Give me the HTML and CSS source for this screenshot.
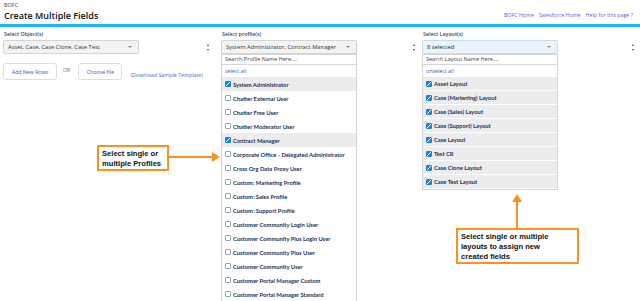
FILE: index.html
```html
<!DOCTYPE html>
<html lang="en">
<head>
    <meta charset="UTF-8">
    <meta name="viewport" content="width=device-width, initial-scale=1.0">
    <title>Create Multiple Fields</title>
    <link rel="stylesheet" href="styles.css">
</head>
<body>

<!-- Page header -->
<header class="page-head">
    <div class="titles">
        <div class="app-name">BOFC</div>
        <h1>Create Multiple Fields</h1>
    </div>
    <nav class="links">
        <a href="#">BOFC Home</a>
        <a href="#">Salesforce Home</a>
        <a href="#">Help for this page ?</a>
    </nav>
</header>

<main class="cols">

    <!-- Objects -->
    <section class="col col-object">
        <div class="field-label">Select Object(s)</div>
        <div class="select-row">
            <div class="select">
                <span>Asset, Case, Case Clone, Case Test</span>
                <span class="caret"></span>
            </div>
            <span class="spin"></span>
        </div>
        <div class="actions">
            <button class="btn">Add New Rows</button>
            <span class="or">OR</span>
            <button class="btn">Choose file</button>
            <a href="#" class="sample">(Download Sample Template)</a>
        </div>
    </section>

    <!-- Profiles -->
    <section class="col col-profile">
        <div class="field-label">Select profile(s)</div>
        <div class="select-row">
            <div class="select">
                <span>System Administrator, Contract Manager</span>
                <span class="caret"></span>
            </div>
            <span class="spin"></span>
        </div>
        <div class="panel">
            <div class="search">Search Profile Name Here....</div>
            <a href="#" class="toggle-all">select all</a>
            <ul class="options">
                <li class="on"><span class="box"></span>System Administrator</li>
                <li><span class="box"></span>Chatter External User</li>
                <li><span class="box"></span>Chatter Free User</li>
                <li><span class="box"></span>Chatter Moderator User</li>
                <li class="on"><span class="box"></span>Contract Manager</li>
                <li><span class="box"></span>Corporate Office - Delegated Administrator</li>
                <li><span class="box"></span>Cross Org Data Proxy User</li>
                <li><span class="box"></span>Custom: Marketing Profile</li>
                <li><span class="box"></span>Custom: Sales Profile</li>
                <li><span class="box"></span>Custom: Support Profile</li>
                <li><span class="box"></span>Customer Community Login User</li>
                <li><span class="box"></span>Customer Community Plus Login User</li>
                <li><span class="box"></span>Customer Community Plus User</li>
                <li><span class="box"></span>Customer Community User</li>
                <li><span class="box"></span>Customer Portal Manager Custom</li>
                <li><span class="box"></span>Customer Portal Manager Standard</li>
            </ul>
        </div>
    </section>

    <!-- Layouts -->
    <section class="col col-layout">
        <div class="field-label">Select Layout(s)</div>
        <div class="select-row">
            <div class="select select-open">
                <span>8 selected</span>
                <span class="caret"></span>
            </div>
            <span class="spin"></span>
        </div>
        <div class="panel">
            <div class="search">Search Layout Name Here....</div>
            <a href="#" class="toggle-all">unselect all</a>
            <ul class="options all-on">
                <li class="on"><span class="box"></span>Asset Layout</li>
                <li class="on"><span class="box"></span>Case (Marketing) Layout</li>
                <li class="on"><span class="box"></span>Case (Sales) Layout</li>
                <li class="on"><span class="box"></span>Case (Support) Layout</li>
                <li class="on"><span class="box"></span>Case Layout</li>
                <li class="on"><span class="box"></span>Test CR</li>
                <li class="on"><span class="box"></span>Case Clone Layout</li>
                <li class="on"><span class="box"></span>Case Test Layout</li>
            </ul>
        </div>
    </section>

</main>

<!-- Annotations -->
<div class="note note-profiles">Select single or<br>multiple Profiles</div>
<div class="arrow arrow-right"></div>

<div class="arrow arrow-up"></div>
<div class="note note-layouts">Select single or multiple<br>layouts to assign new<br>created fields</div>

</body>
</html>
```

FILE: styles.css
```css
html, body {
    height: 301px;
    overflow: hidden;
}
body {
    margin: 0;
    font-family: 'Lato', 'Open Sans', sans-serif;
    background-color: #ffffff;
    color: #16325c;
    position: relative;
}

/* header */
.page-head {
    display: flex;
    justify-content: space-between;
    align-items: flex-end;
    padding: 3px 7px 3px 4px;
    border-bottom: 3px solid #1ab4f0;
    height: 18px;
}
.app-name {
    font-family: 'Open Sans', sans-serif;
    font-size: 5.5px;
    color: #444;
    line-height: 7px;
}
h1 {
    margin: 2px 0 0;
    font-family: 'Open Sans', sans-serif;
    font-size: 9px;
    font-weight: 600;
    color: #111;
    line-height: 10px;
}
.links {
    display: flex;
    gap: 5px;
    padding-bottom: 2px;
}
.links a {
    font-family: 'Open Sans', sans-serif;
    font-size: 5.3px;
    color: #5c5ce6;
    text-decoration: none;
}

/* columns */
.cols {
    display: flex;
    padding: 3px 0 0 3px;
}
.col-object {
    width: 218px;
}
.col-profile {
    width: 201px;
}
.col-layout {
    flex: 1;
}
.field-label {
    font-family: 'Open Sans', sans-serif;
    font-size: 5.3px;
    font-weight: 600;
    color: #3a4668;
    line-height: 8px;
    padding-left: 1px;
    margin-bottom: 2px;
}
.select-row {
    display: flex;
    align-items: center;
}
.select {
    width: 136px;
    height: 14px;
    box-sizing: border-box;
    border: 1px solid #d4d4d4;
    border-radius: 2px;
    background-color: #f3f3f3;
    display: flex;
    align-items: center;
    justify-content: space-between;
    padding: 0 6px 0 4px;
    font-family: 'Open Sans', sans-serif;
    font-size: 5.8px;
    color: #333;
}
.select-open {
    background-color: #e9f5fd;
    border-color: #c9dcea;
    color: #222;
}
.caret {
    width: 0;
    height: 0;
    border-left: 2.5px solid transparent;
    border-right: 2.5px solid transparent;
    border-top: 2.5px solid #888;
}

/* tiny up/down handle right of each select */
.spin {
    position: relative;
    width: 3px;
    height: 7px;
}
.spin::before, .spin::after {
    content: "";
    position: absolute;
    left: 0;
    border-left: 1.5px solid transparent;
    border-right: 1.5px solid transparent;
}
.spin::before {
    top: 0;
    border-bottom: 2px solid #444;
}
.spin::after {
    bottom: 0;
    border-top: 2px solid #444;
}
.col-object .spin { margin-left: 68px; }
.col-profile .spin { margin-left: 56px; }
.col-layout .spin { margin-left: 74px; }

/* buttons under objects */
.actions {
    display: flex;
    align-items: center;
    margin-top: 9px;
}
.btn {
    height: 17px;
    border: 1px solid #d8dde6;
    border-radius: 3px;
    background-color: #fff;
    font-family: 'Open Sans', sans-serif;
    font-size: 5.3px;
    color: #2a62c9;
    padding: 0;
}
.actions .btn:first-child { width: 54px; }
.actions .btn:nth-child(3) { width: 44px; }
.or {
    font-family: 'Open Sans', sans-serif;
    font-size: 5.3px;
    color: #777;
    margin: 0 8px 4px 6px;
}
.sample {
    font-family: 'Open Sans', sans-serif;
    font-size: 5.3px;
    color: #3a6fd8;
    text-decoration: none;
    margin: 7px 0 0 8px;
}

/* dropdown panels */
.panel {
    width: 136px;
    box-sizing: border-box;
    border: 1px solid #d4d4d4;
    border-top: none;
    background-color: #fff;
}
.search {
    height: 11px;
    box-sizing: border-box;
    border: 1px solid #d6d6d6;
    margin: 0 -1px;
    padding: 0 3px;
    font-family: 'Open Sans', sans-serif;
    font-size: 5.5px;
    line-height: 9px;
    color: #444;
}
.toggle-all {
    display: block;
    height: 12px;
    padding: 0 3px;
    font-family: 'Open Sans', sans-serif;
    font-size: 5.3px;
    line-height: 12px;
    color: #2a62c9;
    text-decoration: none;
}
.options {
    list-style: none;
    margin: 0;
    padding: 0;
}
.options li {
    height: 14px;
    display: flex;
    align-items: center;
    padding-left: 3px;
    font-size: 5.8px;
    font-weight: 700;
    color: #16325c;
    white-space: nowrap;
}
.options li.on {
    background-color: #ececec;
}
.all-on li {
    border-bottom: 1px solid #fff;
    height: 13px;
}
.box {
    width: 4px;
    height: 4px;
    border: 0.8px solid #9aa3ad;
    border-radius: 1px;
    background-color: #fff;
    margin-right: 2px;
    flex-shrink: 0;
}
.on .box {
    border-color: #1b7fe0;
    background:
        linear-gradient(135deg, transparent 45%, #fff 45%, #fff 60%, transparent 60%),
        #1b7fe0;
}

/* annotations drawn over the page */
.note {
    position: absolute;
    border: 2px solid #f7931e;
    background-color: #fff;
    font-family: 'Liberation Sans', Arial, sans-serif;
    font-weight: bold;
    font-size: 7.6px;
    line-height: 10px;
    color: #111;
    box-sizing: border-box;
}
.note-profiles {
    left: 97px;
    top: 145px;
    width: 72px;
    height: 26px;
    padding: 2px 3px;
}
.note-layouts {
    left: 456px;
    top: 228px;
    width: 123px;
    height: 36px;
    padding: 2px 3px;
}
.arrow {
    position: absolute;
    background-color: #f7931e;
}
.arrow-right {
    left: 169px;
    top: 156px;
    width: 44px;
    height: 2px;
}
.arrow-right::after {
    content: "";
    position: absolute;
    right: -7px;
    top: -4px;
    border-top: 5px solid transparent;
    border-bottom: 5px solid transparent;
    border-left: 8px solid #f7931e;
}
.arrow-up {
    left: 516px;
    top: 202px;
    width: 2px;
    height: 26px;
}
.arrow-up::after {
    content: "";
    position: absolute;
    left: -4px;
    top: -8px;
    border-left: 5px solid transparent;
    border-right: 5px solid transparent;
    border-bottom: 8px solid #f7931e;
}
```
